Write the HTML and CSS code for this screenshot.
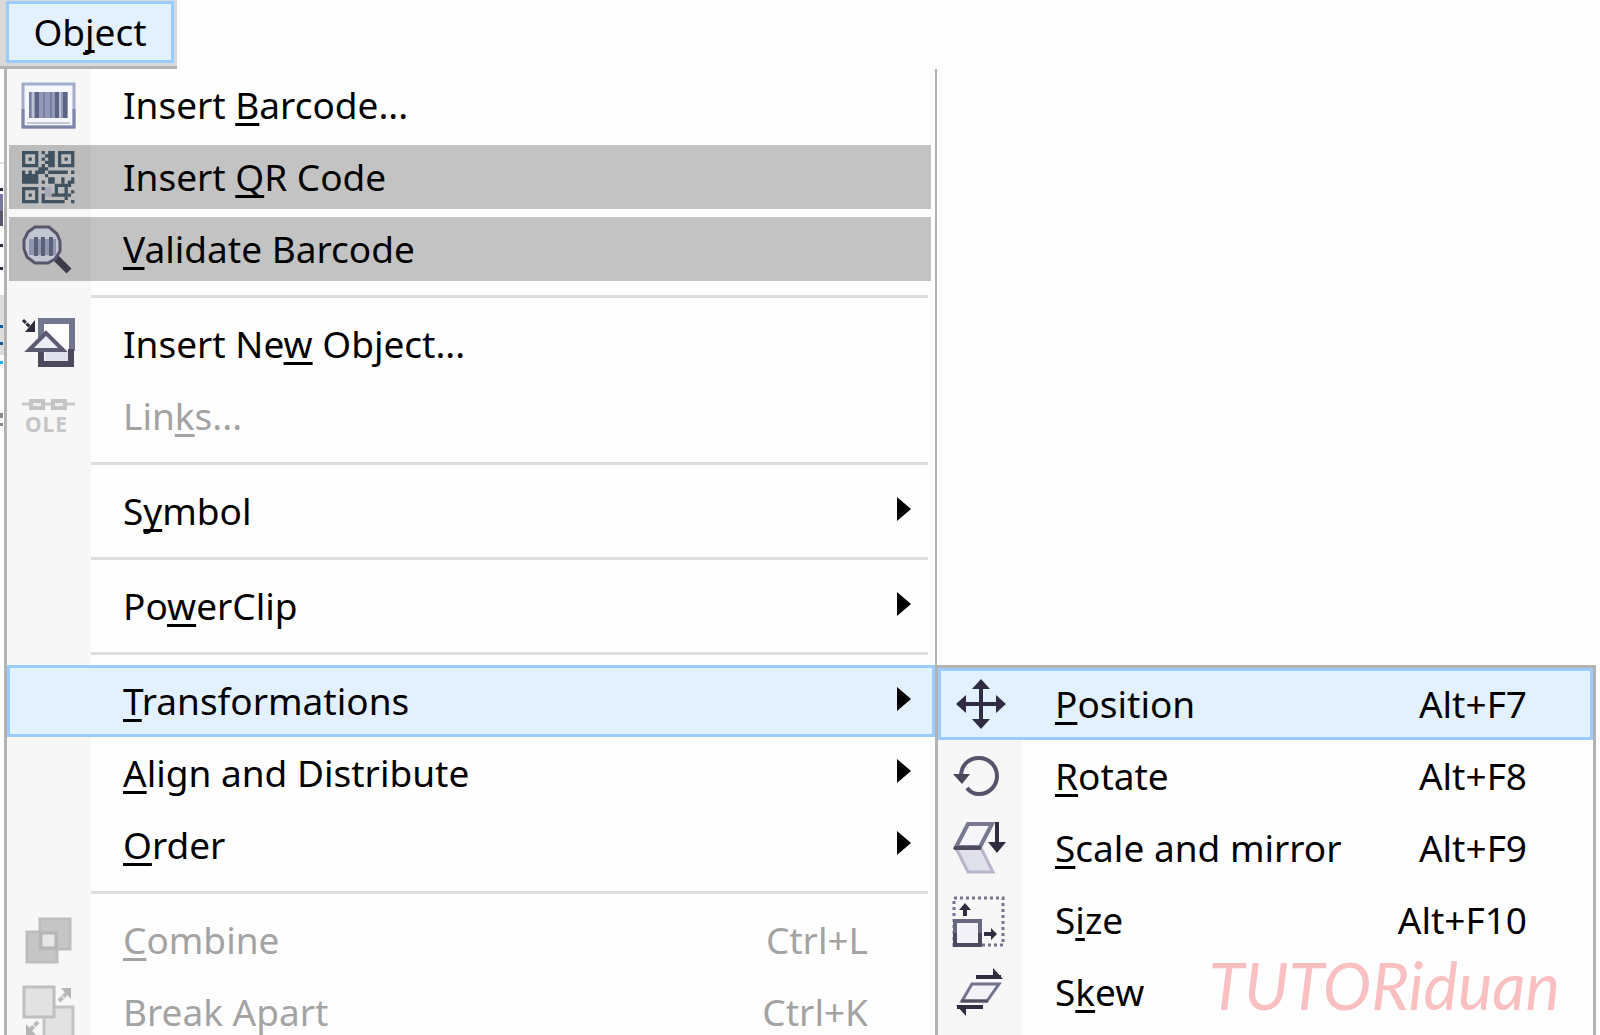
FILE: index.html
```html
<!DOCTYPE html>
<html lang="en">
<head>
  <meta charset="UTF-8">
  <meta name="viewport" content="width=device-width, initial-scale=1">
  <title>Object menu</title>
  <link rel="stylesheet" href="styles.css">
</head>
<body>
  <header class="menubar">
    <button class="menubar__item" type="button">Ob<u>j</u>ect</button>
  </header>

  <main class="workspace">
    <!-- edge of the toolbox behind the menu -->
    <svg class="toolbox-edge" viewBox="0 0 4 966" aria-hidden="true">
      <path fill="#ddd" d="M0 93h4v2H0zM0 226h4v60H0z"/>
      <path fill="#77779b" d="M0 125h3v17H0z"/>
      <path fill="#5a5469" d="M0 142h3v15H0z"/>
      <path fill="#2e2b3f" d="M0 119h3v3H0zM0 175h3v3H0zM0 198h3v3H0z"/>
      <path fill="#0d5c9c" d="M0 256h3v3H0zM0 273h3v3H0z"/>
      <path fill="#1ab0ff" d="M0 292h3v3H0z"/>
      <path fill="#888" d="M0 344h3v5H0zM0 354h3v3H0z"/>
    </svg>

    <ul class="menu">
      <li>
        <button class="menu__item" type="button">
          <svg class="icon" viewBox="0 0 54 54">
            <rect x="1" y="6" width="51" height="43" fill="#f6f7fc" stroke="#a3adcb" stroke-width="3"/>
            <path d="M1 31v18h51V31" fill="none" stroke="#7d85a9" stroke-width="3"/>
            <path d="M5 45h43" stroke="#c4c8dc" stroke-width="2"/>
            <path d="M7 14h39v26H7z" fill="#9299b8"/>
            <path d="M15 14v26M35 14v26M43 14v26" stroke="#5c6485" stroke-width="4"/>
            <path d="M8 14v26M22 14v26M29 14v26" stroke="#7881a5" stroke-width="2"/>
            <path d="M11 14v26M38 14v26" stroke="#bcc1d7" stroke-width="2"/>
          </svg>
          <span class="label">Insert <u>B</u>arcode...</span>
        </button>
      </li>
      <li>
        <button class="menu__item menu__item--marked" type="button">
          <svg class="icon" viewBox="0 0 16.5 16.5">
            <g fill="none" stroke="#40525f">
              <path d="M.5 .8h4v4h-4zM11.5 .8h4v4h-4zM.5 11.8h4v4h-4zM10.5 10.8h3v3h-3z"/>
            </g>
            <path fill="#40525f" d="M2 2.300h1v1H2zM13 2.300h1v1h-1zM2 13.300h1v1H2zM6 .3h1v1H6zM8 .3h2v5H8zM7 1.300h1v1H7zM6 2.300h1v1H6zM7 3.300h1v1H7zM6 4.300h1v1H6zM5 5.300h3v1H5zM0 6.300h1v1h1v-1h1v1h1v-1h3v1H5v3H0zM8 6.300h6v1H8zM15 6.300h1v1h-1zM7 7.300h1v1H7zM8 8.300h2v2H8zM15 8.300h1v2h-1zM14 9.300h1v2h-1zM6 9.300h1v1H6zM12 8.300h1v2h-1zM15 12.300h1v1h-1zM14 13.300h1v1h-1zM15 15.300h1v1h-1zM6 11.300h1v1H6zM6 13.300h1v3H6zM7 15.300h6v1H7zM9 13.300h1v1H9zM13 14.300h1v1h-1z"/>
            <path fill="#a9a8bb" d="M7 11.300h2v3H7z"/>
          </svg>
          <span class="label">Insert <u>Q</u>R Code</span>
        </button>
      </li>
      <li>
        <button class="menu__item menu__item--marked" type="button">
          <svg class="icon" viewBox="0 0 54 54">
            <path d="M32 34l15 15" stroke="#3d3a49" stroke-width="7"/>
            <path d="M13 5h14l8 7 3 7v10l-5 8-7 4H13l-8-6-3-8V18l4-8z" fill="#c2c6d3" stroke="#58566b" stroke-width="3"/>
            <path d="M7 17h27v16H7z" fill="#8e95ad"/>
            <path d="M14 15v19M21 15v19M29 15v19" stroke="#596078" stroke-width="4"/>
          </svg>
          <span class="label"><u>V</u>alidate Barcode</span>
        </button>
      </li>
      <li class="menu__separator" role="separator"></li>
      <li>
        <button class="menu__item" type="button">
          <svg class="icon" viewBox="0 0 54 54">
            <path d="M19 4h31v46H19z" fill="#fff"/>
            <path d="M23 35h23v11H23z" fill="#e1e1ec"/>
            <path d="M19 34V4h31v30" fill="none" stroke="#73768f" stroke-width="6"/>
            <path d="M19 34v13h30V32" fill="none" stroke="#4d485c" stroke-width="6"/>
            <path d="M24 16L7 33h34z" fill="#ededf4" stroke="#5d5b72" stroke-width="4"/>
            <path d="M1 3l9 9" stroke="#2d2a3d" stroke-width="3" stroke-dasharray="4 1"/>
            <path d="M13 3v12H3z" fill="#2d2a3d"/>
          </svg>
          <span class="label">Insert Ne<u>w</u> Object...</span>
        </button>
      </li>
      <li>
        <button class="menu__item" type="button" disabled>
          <svg class="icon" viewBox="0 0 54 54">
            <path d="M0 15h53" stroke="#c9c9c9" stroke-width="3"/>
            <path d="M9 12h12v7H9zM31 12h12v7H31z" fill="#f0f0f0" stroke="#c4c4c4" stroke-width="4"/>
            <text class="icon__text" x="3" y="43">OLE</text>
          </svg>
          <span class="label">Lin<u>k</u>s...</span>
        </button>
      </li>
      <li class="menu__separator" role="separator"></li>
      <li>
        <button class="menu__item menu__item--parent" type="button">
          <span class="icon"></span>
          <span class="label">S<u>y</u>mbol</span>
        </button>
      </li>
      <li class="menu__separator" role="separator"></li>
      <li>
        <button class="menu__item menu__item--parent" type="button">
          <span class="icon"></span>
          <span class="label">Po<u>w</u>erClip</span>
        </button>
      </li>
      <li class="menu__separator" role="separator"></li>
      <li class="menu__open">
        <button class="menu__item menu__item--parent menu__item--active" type="button">
          <span class="icon"></span>
          <span class="label"><u>T</u>ransformations</span>
        </button>

        <ul class="menu menu--sub">
          <li>
            <button class="menu__item menu__item--active" type="button">
              <svg class="icon" viewBox="0 0 54 54">
                <path d="M27 8v38M8 27h38" stroke="#302d40" stroke-width="4"/>
                <path d="M27 2l9 10H18zM27 52l9-10H18zM2 27l10-9v18zM52 27l-10-9v18z" fill="#302d40"/>
              </svg>
              <span class="label"><u>P</u>osition</span>
              <kbd>Alt+F7</kbd>
            </button>
          </li>
          <li>
            <button class="menu__item" type="button">
              <svg class="icon" viewBox="0 0 54 54">
                <path d="M7 27C7 16 15 9 25 9s18 8 18 18-8 18-18 18c-5 0-9-2-12-6" fill="none" stroke="#56536a" stroke-width="4"/>
                <path d="M-1 25h17l-8 10z" fill="#4b475b"/>
              </svg>
              <span class="label"><u>R</u>otate</span>
              <kbd>Alt+F8</kbd>
            </button>
          </li>
          <li>
            <button class="menu__item" type="button">
              <svg class="icon" viewBox="0 0 54 54">
                <path d="M2 27h25l12 24H14z" fill="#e0e0eb" stroke="#b8b6ca" stroke-width="3"/>
                <path d="M14 3h24L26 26H2z" fill="#f5f5fa" stroke="#777991" stroke-width="4"/>
                <path d="M0 27h27" stroke="#514b60" stroke-width="4"/>
                <path d="M43 1v22" stroke="#302d40" stroke-width="4"/>
                <path d="M34 21h18l-9 11z" fill="#302d40"/>
              </svg>
              <span class="label"><u>S</u>cale and mirror</span>
              <kbd>Alt+F9</kbd>
            </button>
          </li>
          <li>
            <button class="menu__item" type="button">
              <svg class="icon" viewBox="0 0 54 54">
                <path d="M0 5h49v47H0z" fill="none" stroke="#74758e" stroke-width="3" stroke-dasharray="3 3"/>
                <path d="M1 28h25v24H1z" fill="#f1f1f7" stroke="#686880" stroke-width="4"/>
                <path d="M1 40v12h25V40" fill="none" stroke="#4d495e" stroke-width="4"/>
                <path d="M11 23V14M30 41h9" stroke="#302d40" stroke-width="4"/>
                <path d="M5 17h12l-6-7zM37 35v12l6-6z" fill="#302d40"/>
              </svg>
              <span class="label">S<u>i</u>ze</span>
              <kbd>Alt+F10</kbd>
            </button>
          </li>
          <li>
            <button class="menu__item" type="button">
              <svg class="icon" viewBox="0 0 54 54">
                <path d="M18 19h27L33 36H8z" fill="#f3f3f8" stroke="#73748c" stroke-width="3"/>
                <path d="M7 36h27" stroke="#514d63" stroke-width="3"/>
                <path d="M22 12h25M3 42h26" stroke="#302d40" stroke-width="4"/>
                <path d="M39 3l10 11H39zM12 51L2 40h10z" fill="#302d40"/>
              </svg>
              <span class="label">S<u>k</u>ew</span>
            </button>
          </li>
        </ul>
      </li>
      <li>
        <button class="menu__item menu__item--parent" type="button">
          <span class="icon"></span>
          <span class="label"><u>A</u>lign and Distribute</span>
        </button>
      </li>
      <li>
        <button class="menu__item menu__item--parent" type="button">
          <span class="icon"></span>
          <span class="label"><u>O</u>rder</span>
        </button>
      </li>
      <li class="menu__separator" role="separator"></li>
      <li>
        <button class="menu__item" type="button" disabled>
          <svg class="icon" viewBox="0 0 54 54">
            <path d="M18 6h30v30H18zM5 19h30v30H5z" fill="#c6c6c6" stroke="#bdbdbd" stroke-width="3"/>
            <path d="M19 20h15v15H19z" fill="#e6e6e6" stroke="#b5b5b5" stroke-width="3"/>
          </svg>
          <span class="label"><u>C</u>ombine</span>
          <kbd>Ctrl+L</kbd>
        </button>
      </li>
      <li>
        <button class="menu__item" type="button" disabled>
          <svg class="icon" viewBox="0 0 54 54">
            <path d="M22 22h29v30H22z" fill="#e2e2e2" stroke="#c4c4c4" stroke-width="3"/>
            <path d="M2 2h30v30H2z" fill="#e2e2e2" stroke="#bfbfbf" stroke-width="3"/>
            <path d="M37 16l8-8M16 37l-8 8" stroke="#bbb" stroke-width="4" stroke-dasharray="5 1"/>
            <path d="M39 3h10v11zM4 39v11h10z" fill="#b5b5b5"/>
          </svg>
          <span class="label">Break Apart</span>
          <kbd>Ctrl+K</kbd>
        </button>
      </li>
    </ul>
  </main>

  <p class="watermark">TUTORiduan</p>
</body>
</html>
```
FILE: styles.css
```css
* {
  box-sizing: border-box;
}
body {
  margin: 0;
  height: 100vh;
  overflow: hidden;
  position: relative;
  background: #fefefe;
  font-family: "Noto Sans", "Open Sans", sans-serif;
  font-size: 37px;
  color: #000;
}
button {
  font: inherit;
  color: inherit;
  border: 0;
  margin: 0;
  background: none;
  text-align: left;
}
u {
  text-decoration-thickness: 3px;
  text-underline-offset: 4px;
  text-decoration-skip-ink: none;
}

/* menu bar */
.menubar {
  width: 177px;
  height: 69px;
  padding: 1px 3px 0 6px;
  background: #d9d9d9;
  border-bottom: 3px solid #b3b3b3;
}
.menubar__item {
  display: block;
  width: 100%;
  height: 62px;
  padding: 0;
  line-height: 56px;
  text-align: center;
  background: #e3f1ff;
  border: 3px solid #99ccff;
}

/* drop-down */
.workspace {
  display: flex;
  align-items: flex-start;
  height: calc(100vh - 69px);
  overflow: hidden;
}
.toolbox-edge {
  flex: none;
  width: 4px;
  height: 966px;
}
.menu {
  flex: 1;
  list-style: none;
  margin: 0 663px 0 0;
  padding: 0;
  border: solid #b3b3b3;
  border-width: 0 2px 0 3px;
  background: linear-gradient(to right, #f7f7f7 84px, #fefefe 84px);
}
.menu li {
  display: flow-root;
}
.menu__item {
  display: flex;
  align-items: center;
  width: 100%;
  height: 72px;
  padding: 0 67px 0 15px;
}
.menu__item:disabled {
  color: #a3a3a3;
}
.icon {
  flex: none;
  width: 54px;
  height: 54px;
  margin-right: 47px;
  overflow: visible;
}
.icon__text {
  font: bold 21px "Noto Sans", sans-serif;
  letter-spacing: 1px;
  fill: #c6c6c6;
}
.label {
  flex: 1;
  padding-bottom: 2px;
  white-space: nowrap;
}
kbd {
  font: inherit;
  padding-bottom: 2px;
}
.menu__item--marked {
  height: 64px;
  margin: 4px 4px 4px 2px;
  width: calc(100% - 6px);
  padding-left: 13px;
  background: linear-gradient(to right, #bcbcbc 82px, #c3c3c3 82px);
}
.menu__item--active {
  background: #e3f1ff;
  box-shadow: inset 0 0 0 3px #99ccff;
}
.menu__item--parent {
  padding-right: 24px;
}
.menu__item--parent::after {
  content: "";
  border: solid transparent;
  border-width: 12px 0 12px 14px;
  border-left-color: #000;
  margin-bottom: 4px;
}
.menu__separator {
  height: 23px;
  padding: 10px 7px 0 84px;
}
.menu__separator::before {
  content: "";
  display: block;
  height: 3px;
  background: #dedede;
}

/* submenu */
.menu__open {
  position: relative;
}
.menu--sub {
  position: absolute;
  top: 0;
  left: 100%;
  width: 661px;
  height: 100vh;
  margin: 0;
  border-width: 3px 3px 0 3px;
}
.menu--sub .menu__item {
  padding-right: 66px;
  padding-left: 16px;
}

.watermark {
  position: absolute;
  right: 40px;
  bottom: 10px;
  margin: 0;
  font: italic 65px/80px Lato, sans-serif;
  color: #f9bfc1;
}
```
